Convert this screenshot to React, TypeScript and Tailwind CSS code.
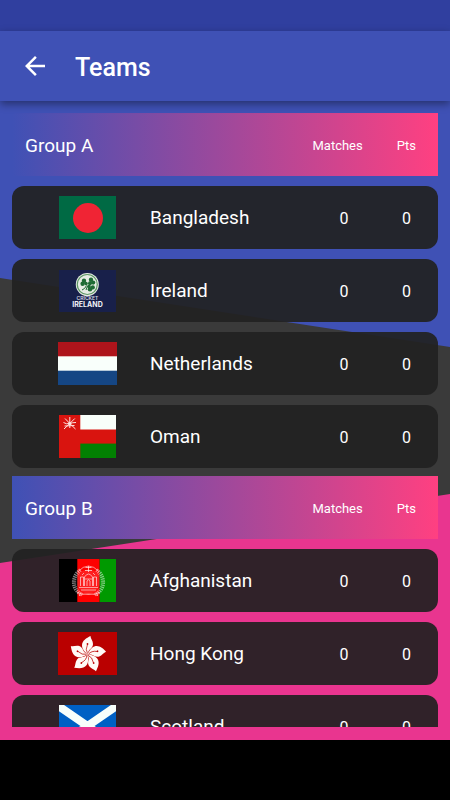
import React from 'react';
import { MdArrowBack } from 'react-icons/md';

interface Team {
  name: string;
  matches: number;
  points: number;
  flag: React.ReactNode;
}

interface Group {
  title: string;
  teams: Team[];
}

const BangladeshFlag = () => (
  <svg width="57" height="43" viewBox="0 0 57 43" aria-hidden="true">
    <rect width="57" height="43" fill="#006a44" />
    <circle cx="29" cy="22" r="15" fill="#f02434" />
  </svg>
);

const IrelandFlag = () => (
  <svg width="57" height="42" viewBox="0 0 57 42" aria-hidden="true">
    <rect width="57" height="42" fill="#18204a" />
    <circle cx="28.3" cy="14.5" r="11.5" fill="#e6ece4" />
    <circle cx="28.3" cy="14.5" r="10" fill="none" stroke="#5d9765" strokeWidth="1.2" />
    <g transform="translate(0 -1)">
      <g fill="#1e6b34">
        <circle cx="25" cy="11.8" r="2.2" />
        <circle cx="23.6" cy="14.8" r="2.2" />
        <circle cx="27" cy="14.6" r="1.8" />
        <circle cx="32" cy="10.8" r="2.2" />
        <circle cx="34.2" cy="13.6" r="2.1" />
        <circle cx="31" cy="14.2" r="2" />
        <circle cx="33.8" cy="18.4" r="2.1" />
        <circle cx="31" cy="20.2" r="2.3" />
        <circle cx="30" cy="17.4" r="1.8" />
      </g>
      <path d="M23 21q3-1 4.5-4.5M27 21l1.5-4" fill="none" stroke="#1e6b34" strokeWidth="1" />
    </g>
    <text x="28.5" y="30" fill="#d5d8e3" fontSize="5" fontWeight="600" textAnchor="middle" fontFamily="Inter, sans-serif">CRICKET</text>
    <text x="28.5" y="37" fill="#f1f2f6" fontSize="7" fontWeight="700" textAnchor="middle" fontFamily="Inter, sans-serif">IRELAND</text>
  </svg>
);

const NetherlandsFlag = () => (
  <svg width="59" height="43" viewBox="0 0 59 43" aria-hidden="true">
    <rect width="59" height="43" fill="#f9fffb" />
    <rect width="59" height="14.3" fill="#ae141b" />
    <rect y="28.7" width="59" height="14.3" fill="#154684" />
  </svg>
);

const OmanFlag = () => (
  <svg width="57" height="43" viewBox="0 0 57 43" aria-hidden="true">
    <rect width="57" height="43" fill="#d9140f" />
    <rect x="21.3" width="35.7" height="14.5" fill="#f8fffa" />
    <rect x="21.3" y="28.6" width="35.7" height="14.4" fill="#028002" />
    <g fill="none" stroke="#ffe3df" strokeWidth="1">
      <path d="M10.8 2v7M5 14l5.8-5.5L16.5 14M6 3.500l4.8 5 5-5" />
      <path d="M4.500 7.500q3 2 6 1t6.500-1M5.500 11l10-.5M10.8 8.500V13" />
    </g>
    <circle cx="10.8" cy="8.5" r="1.5" fill="#ffe3df" />
  </svg>
);

const AfghanistanFlag = () => (
  <svg width="57" height="43" viewBox="0 0 57 43" aria-hidden="true">
    <rect width="57" height="43" fill="#000" />
    <rect x="18.3" width="22.4" height="43" fill="#fe0000" />
    <rect x="40.7" width="16.3" height="43" fill="#009900" />
    <circle cx="29.5" cy="22.5" r="12" fill="#fff" opacity=".12" />
    <g fill="none" stroke="#fff">
      <path d="M21.500 11C12 18 13 31 23 35.500M37.500 11c9.500 7 8.500 20-1.500 24.500" strokeWidth="4" strokeDasharray="1.3 .8" opacity=".5" />
      <path d="M19 12.500q10.500-11 21 0" strokeWidth="1" opacity=".55" />
      <path d="M26.500 8.500h6M29.500 7v6M26 11.500h7" strokeWidth="1" opacity=".65" />
      <path d="M21.500 27v-9h3v9M34.500 27v-9h3v9M25.500 27v-9q4-6 8 0v9M28 27v-5q1.500-2.500 3 0v5" strokeWidth="1" opacity=".6" />
      <path d="M20 28.500h19M22 31h15M18 33.500q11.500 4 23 0M20 36.500q9.500-3 19 0" strokeWidth="1.2" opacity=".55" />
      <path d="M23 16l2-2M36 16l-2-2M26 20h7" strokeWidth="1" opacity=".55" />
    </g>
  </svg>
);

const HongKongFlag = () => (
  <svg width="59" height="43" viewBox="0 0 59 43" aria-hidden="true">
    <rect width="59" height="43" fill="#ba0000" />
    {[0, 72, 144, 216, 288].map((angle) => (
      <g key={angle} transform={`translate(29.5 22.5) rotate(${angle})`}>
        <path d="M0 0C-2-2-5.500-5-5.500-9C-5.500-14-1-16.500 3-18.500C3-16 5.500-13.500 5.500-10.500C5.500-7 2.500-5.500 1.500-4C.5-2.500 .5-1 0 0Z" fill="#fffaf6" />
        <path d="M0-1Q-2.500-5 0-10" fill="none" stroke="#ba0000" strokeWidth=".7" />
        <circle cx="0" cy="-10.5" r=".9" fill="#ba0000" />
      </g>
    ))}
  </svg>
);

const ScotlandFlag = () => (
  <svg width="57" height="43" viewBox="0 0 57 43" aria-hidden="true">
    <rect width="57" height="43" fill="#0060c4" />
    <path d="M-2 0L59 42M59 0L-2 42" stroke="#f8fffb" strokeWidth="8" />
  </svg>
);

const groups: Group[] = [
  {
    title: 'Group A',
    teams: [
      { name: 'Bangladesh', matches: 0, points: 0, flag: <BangladeshFlag /> },
      { name: 'Ireland', matches: 0, points: 0, flag: <IrelandFlag /> },
      { name: 'Netherlands', matches: 0, points: 0, flag: <NetherlandsFlag /> },
      { name: 'Oman', matches: 0, points: 0, flag: <OmanFlag /> },
    ],
  },
  {
    title: 'Group B',
    teams: [
      { name: 'Afghanistan', matches: 0, points: 0, flag: <AfghanistanFlag /> },
      { name: 'Hong Kong', matches: 0, points: 0, flag: <HongKongFlag /> },
      { name: 'Scotland', matches: 0, points: 0, flag: <ScotlandFlag /> },
    ],
  },
];

const TeamRow: React.FC<{ team: Team }> = ({ team }) => (
  <tr className="flex h-[63px] items-center rounded-xl bg-[#212121]/93 pl-[46px]">
    <td className="flex w-[59px] shrink-0 justify-center">{team.flag}</td>
    <th scope="row" className="flex-1 pt-0.5 pl-[33px] text-left text-[19px] font-normal">
      {team.name}
    </th>
    <td className="w-[62px] pt-0.5 text-center text-base">{team.matches}</td>
    <td className="w-[63px] pt-0.5 text-center text-base">{team.points}</td>
  </tr>
);

const GroupTable: React.FC<{ group: Group }> = ({ group }) => (
  <table className="flex flex-col gap-[10px]">
    <thead className="block">
      <tr className="flex h-[63px] items-center bg-linear-to-r/srgb from-[#3f51b5] to-[#ff4081] pt-0.5 pr-[22px] pl-[13px]">
        <th scope="col" className="flex-1 pt-0.5 text-left text-[19px] font-normal">
          {group.title}
        </th>
        <th scope="col" className="text-[13px] font-normal">Matches</th>
        <th scope="col" className="pl-[34px] text-[13px] font-normal">Pts</th>
      </tr>
    </thead>
    <tbody className="flex flex-col gap-[10px]">
      {group.teams.map((team) => (
        <TeamRow key={team.name} team={team} />
      ))}
    </tbody>
  </table>
);

const App: React.FC = () => {
  return (
    <div className="flex h-screen flex-col bg-black font-[Roboto,sans-serif] text-white">
      {/* Status bar */}
      <div className="h-[31px] shrink-0 bg-[#303f9f]" />

      <header className="z-10 flex h-[70px] shrink-0 items-center bg-[#3f51b5] px-5 shadow-[0_3px_8px_rgba(0,0,0,0.4)]">
        <button type="button" aria-label="Back" className="mr-[25px]">
          <MdArrowBack size={30} />
        </button>
        <h1 className="pt-1 text-[25px] font-medium">Teams</h1>
      </header>

      <main className="relative flex min-h-0 flex-1 flex-col px-3 pt-3 pb-[13px]">
        {/* Tri-colour backdrop */}
        <svg
          className="absolute inset-0 h-full w-full"
          viewBox="0 0 450 639"
          preserveAspectRatio="none"
          aria-hidden="true"
        >
          <rect width="450" height="639" fill="#3f51b5" />
          <path d="M0 177L450 246V639H0Z" fill="#3a3a3a" />
          <path d="M0 462L450 393V639H0Z" fill="#e9358f" />
        </svg>

        <div className="relative flex min-h-0 flex-1 flex-col gap-2 overflow-y-auto [scrollbar-width:none]">
          {groups.map((group) => (
            <GroupTable key={group.title} group={group} />
          ))}
        </div>
      </main>

      {/* System navigation bar */}
      <div className="h-[60px] shrink-0 bg-black" />
    </div>
  );
};

export default App;
